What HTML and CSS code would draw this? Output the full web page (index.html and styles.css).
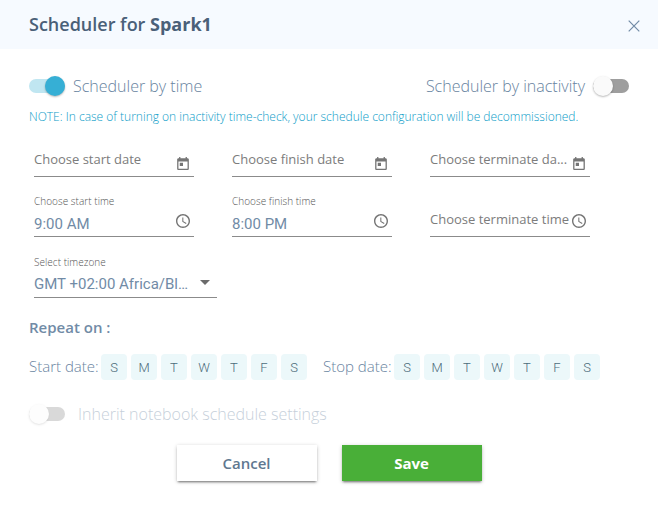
FILE: index.html
```html
<!DOCTYPE html>
<html lang="en">
<head>
<meta charset="utf-8">
<title>Scheduler</title>
<link rel="stylesheet" href="styles.css">
</head>
<body>
<svg width="0" height="0" class="defs">
  <symbol id="calendar" viewBox="3 1 18 20"><path d="M19 3h-1V1h-2v2H8V1H6v2H5c-1.110 0-1.990.9-1.990 2L3 19c0 1.100.890 2 2 2h14c1.100 0 2-.9 2-2V5c0-1.100-.9-2-2-2zm0 16H5V8h14v11zM7 10h5v5H7z"/></symbol>
  <symbol id="clock" viewBox="2 2 20 20"><path d="M11.990 2C6.470 2 2 6.480 2 12s4.470 10 9.990 10C17.520 22 22 17.520 22 12S17.520 2 11.990 2zM12 20c-4.420 0-8-3.580-8-8s3.580-8 8-8 8 3.580 8 8-3.580 8-8 8zm.5-13H11v6l5.250 3.150.750-1.230-4.500-2.670z"/></symbol>
</svg>
<header class="header">
  <h1 class="title">Scheduler for <b>Spark1</b></h1>
  <svg class="close" viewBox="0 0 12 12"><path d="M.7.7l10.600 10.600M11.300.7L.7 11.300"/></svg>
</header>
<main class="content">
  <div class="toggles">
    <div class="toggle"><span class="switch on"></span><span>Scheduler by time</span></div>
    <div class="toggle"><span>Scheduler by inactivity</span><span class="switch"></span></div>
  </div>
  <p class="note">NOTE: In case of turning on inactivity time-check, your schedule configuration will be decommissioned.</p>
  <div class="fields">
    <div class="field"><span class="placeholder">Choose start date</span><svg class="icon cal"><use href="#calendar"/></svg></div>
    <div class="field"><span class="placeholder">Choose finish date</span><svg class="icon cal"><use href="#calendar"/></svg></div>
    <div class="field"><span class="placeholder">Choose terminate da...</span><svg class="icon cal"><use href="#calendar"/></svg></div>
    <div class="field"><div class="filled"><span class="label">Choose start time</span><span class="value">9:00 AM</span></div><svg class="icon"><use href="#clock"/></svg></div>
    <div class="field"><div class="filled"><span class="label">Choose finish time</span><span class="value">8:00 PM</span></div><svg class="icon"><use href="#clock"/></svg></div>
    <div class="field"><span class="placeholder">Choose terminate time</span><svg class="icon"><use href="#clock"/></svg></div>
  </div>
  <div class="field zone"><div class="filled"><span class="label">Select timezone</span><span class="value">GMT +02:00 Africa/Bl…</span></div><span class="arrow"></span></div>
  <h2 class="repeat">Repeat on :</h2>
  <div class="days-row">
    <span class="days-label start">Start date:</span>
    <div class="days"><span>S</span><span>M</span><span>T</span><span>W</span><span>T</span><span>F</span><span>S</span></div>
    <span class="days-label stop">Stop date:</span>
    <div class="days"><span>S</span><span>M</span><span>T</span><span>W</span><span>T</span><span>F</span><span>S</span></div>
  </div>
  <div class="toggle inherit"><span class="switch"></span><span>Inherit notebook schedule settings</span></div>
  <div class="actions">
    <button class="btn">Cancel</button>
    <button class="btn save">Save</button>
  </div>
</main>
</body>
</html>
```
FILE: styles.css
```css
* { box-sizing: border-box; }
body {
  margin: 0;
  min-height: 515px;
  background: #fff;
  color: #6883a0;
  font-family: "Open Sans", sans-serif;
  font-weight: 300;
}
.defs { display: block; }
.header {
  height: 49px;
  padding: 0 18px 0 29px;
  display: flex;
  align-items: center;
  justify-content: space-between;
  background: #f6faff;
}
.title {
  margin: -1px 0 0;
  font-size: 18px;
  font-weight: 600;
  line-height: 24px;
  color: #4a6078;
}
.title b { font-weight: 700; }
.close {
  width: 12px;
  height: 12px;
  margin-top: 2px;
  fill: none;
  stroke: #718ba6;
  stroke-width: 1.2;
}
.content { padding: 25px 29px 34px; }
.toggles {
  height: 24px;
  display: flex;
  justify-content: space-between;
}
.toggle {
  height: 24px;
  display: flex;
  align-items: center;
  gap: 8px;
  font-size: 16px;
  line-height: 24px;
  white-space: nowrap;
}
.switch {
  width: 36px;
  height: 14px;
  border-radius: 7px;
  background: #9e9e9e;
  display: flex;
  align-items: center;
}
.switch::before {
  content: "";
  width: 20px;
  height: 20px;
  flex: none;
  border-radius: 50%;
  background: #fafafa;
  box-shadow: 0 1px 2px rgba(0, 0, 0, .28);
}
.switch.on {
  background: #c0e6f1;
  justify-content: flex-end;
}
.switch.on::before { background: #36afd5; }
.note {
  margin: 8px 0 0;
  height: 22px;
  font-size: 12px;
  line-height: 22px;
  color: #0b9cc8;
  white-space: nowrap;
}
.fields {
  padding: 9px 0 0 5px;
  display: grid;
  grid-template-columns: repeat(3, 160px);
  grid-template-rows: 40px 60px;
  column-gap: 38px;
}
.field {
  border-bottom: 1px solid #8b8b8b;
  display: flex;
  justify-content: space-between;
  align-items: flex-end;
  min-width: 0;
  color: #7c7c7c;
}
.placeholder {
  padding-bottom: 7px;
  font-size: 13px;
  font-weight: 400;
  line-height: 20px;
  white-space: nowrap;
}
.icon {
  flex: none;
  width: 14px;
  height: 14px;
  margin: 0 4px 8px 0;
  fill: #757575;
}
.icon.cal {
  width: 12px;
  height: 13px;
  margin: 0 5px 6px 0;
}
.filled {
  display: flex;
  flex-direction: column;
}
.label {
  font-size: 10px;
  line-height: 14px;
  letter-spacing: .04px;
  color: #555;
}
.value {
  margin-top: 6px;
  padding-bottom: 2px;
  font-family: Roboto, sans-serif;
  font-size: 15px;
  font-weight: 400;
  line-height: 20px;
  color: #718ba6;
  white-space: nowrap;
}
.zone {
  width: 183px;
  height: 61px;
  margin-left: 5px;
}
.zone .value {
  margin-top: 5px;
  padding-bottom: 3px;
}
.arrow {
  margin: 0 7px 12px 0;
  border: 5px solid transparent;
  border-top-color: #6b6b6b;
  border-bottom: 0;
}
.repeat {
  margin: 19px 0 0;
  font-size: 15px;
  font-weight: 600;
  line-height: 20px;
  color: #718ba6;
}
.days-row {
  height: 26px;
  margin-top: 17px;
  display: flex;
  align-items: center;
}
.days-label {
  font-size: 15px;
  line-height: 26px;
  margin-top: -2px;
  white-space: nowrap;
}
.start { width: 72px; }
.stop { width: 71px; margin-left: 16px; }
.days {
  display: flex;
  gap: 4px;
}
.days span {
  width: 26px;
  height: 26px;
  border-radius: 4px;
  background: #ecf8fa;
  color: #4d6c7b;
  font-family: Roboto, sans-serif;
  font-size: 13px;
  font-weight: 300;
  line-height: 27px;
  text-align: center;
}
.inherit {
  margin-top: 22px;
  gap: 13px;
  opacity: .38;
}
.actions {
  margin: 19px 0 0 148px;
  display: flex;
  gap: 25px;
}
.btn {
  width: 140px;
  height: 36px;
  border: 0;
  padding: 0 1px 0 0;
  background: #fff;
  color: #607890;
  font: 600 15px/36px "Open Sans", sans-serif;
  box-shadow: 0 2px 2px -1px rgba(0, 0, 0, .45), 0 1px 4px rgba(0, 0, 0, .22);
}
.save {
  background: #49af38;
  color: #fff;
  font-weight: 700;
}
```
